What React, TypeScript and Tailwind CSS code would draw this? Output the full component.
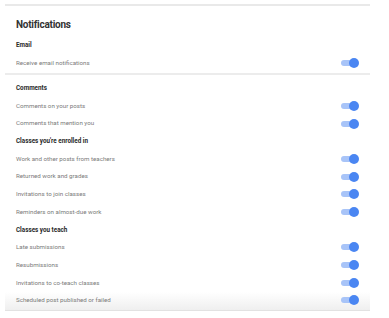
import React from "react";

function Toggle() {
  return (
    <div className="relative w-[18px] h-[10px] flex items-center shrink-0">
      <div className="w-[15px] h-[6px] rounded-full bg-[#a8c4f8]" />
      <div className="absolute right-0 top-0 w-[10px] h-[10px] rounded-full bg-[#4a86f2]" />
    </div>
  );
}

function Item({ label, last }: { label: string; last?: boolean }) {
  return (
    <div
      className={
        "flex items-center justify-between pl-[11px] pr-[11px] " +
        (last
          ? "h-[19px] pb-[1px] bg-gradient-to-b from-white to-[#efefef] border-b border-[#e2e2e2]"
          : "h-[17.7px]")
      }
    >
      <span className="text-[6.2px] text-[#7b7b7b] leading-none">{label}</span>
      <Toggle />
    </div>
  );
}

function Header({ label, first }: { label: string; first?: boolean }) {
  return (
    <div
      className={
        "flex items-center pl-[11px] " +
        (first ? "h-[22px] pt-[4px]" : "h-[17.7px]")
      }
    >
      <span className="text-[6.3px] font-bold text-[#2a2a2a] leading-none">{label}</span>
    </div>
  );
}

export default function App() {
  return (
    <div
      className="w-[389px] h-[318px] bg-white pt-[4px] pl-[5px]"
      style={{ fontFamily: "Roboto, 'Noto Sans', sans-serif" }}
    >
      <div className="w-[365px]">
        <div className="h-[2px] bg-[#e9e9e9]" />
        <div className="h-[31px] pt-[6px] flex items-center pl-[11px]">
          <span className="text-[10px] font-bold tracking-[-0.25px] text-[#333] leading-none">Notifications</span>
        </div>
        <div className="h-[16px] flex items-center pl-[11px]">
          <span className="text-[6.3px] font-bold text-[#2a2a2a] leading-none">Email</span>
        </div>
        <div className="h-[20px] flex items-center justify-between pl-[11px] pr-[11px]">
          <span className="text-[6.2px] text-[#7b7b7b] leading-none">Receive email notifications</span>
          <Toggle />
        </div>
        <div className="h-[2px] bg-[#ececec]" />
        <Header label="Comments" first />
        <Item label="Comments on your posts" />
        <Item label="Comments that mention you" />
        <Header label="Classes you're enrolled in" />
        <Item label="Work and other posts from teachers" />
        <Item label="Returned work and grades" />
        <Item label="Invitations to join classes" />
        <Item label="Reminders on almost-due work" />
        <Header label="Classes you teach" />
        <Item label="Late submissions" />
        <Item label="Resubmissions" />
        <Item label="Invitations to co-teach classes" />
        <Item label="Scheduled post published or failed" last />
      </div>
    </div>
  );
}
